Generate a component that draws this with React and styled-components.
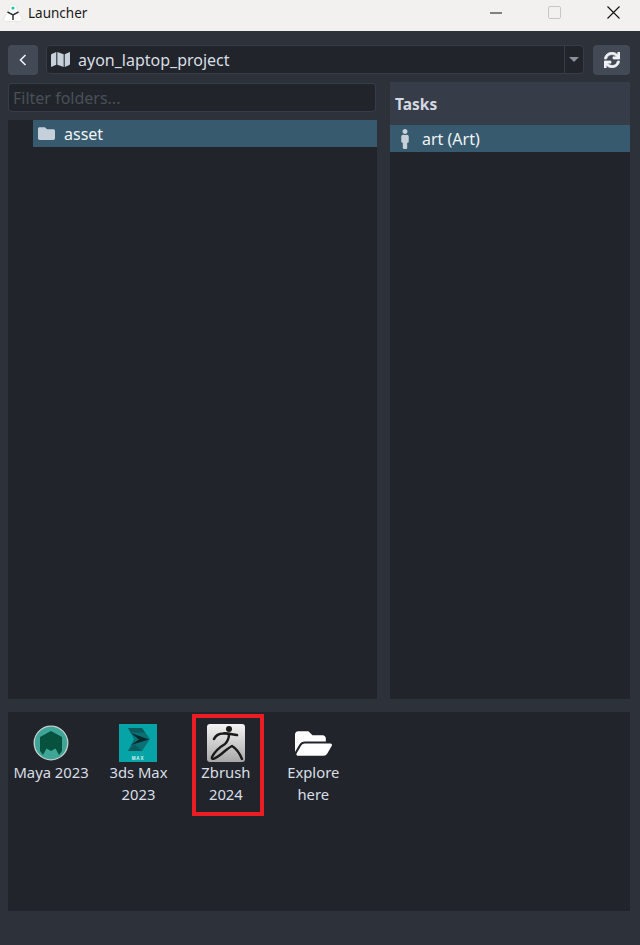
import React from "react";
import styled, { createGlobalStyle } from "styled-components";
import { FaMap, FaFolder, FaMale, FaSync, FaFolderOpen } from "react-icons/fa";

const Global = createGlobalStyle`
  html, body { margin: 0; padding: 0; height: 100%; background: #2c313a; }
  #root { height: 945px; }
  * { box-sizing: border-box; }
`;

const Page = styled.div`
  width: 640px;
  height: 945px;
  display: flex;
  flex-direction: column;
  background: #2c313a;
  color: #d9dee6;
  font-family: "Noto Sans", sans-serif;
  font-size: 16px;
  overflow: hidden;
`;

const TitleBar = styled.div`
  height: 31px;
  flex: none;
  display: flex;
  align-items: center;
  background: #f3f1f0;
  color: #1a1a1a;
  font-size: 13.5px;
  padding: 0 0 6px 3px;
`;

const TitleText = styled.span`
  margin-left: 5px;
  flex: 1;
`;

const WindowButtons = styled.div`
  display: flex;
  margin-right: -3px;
`;

const WindowButton = styled.div`
  width: 59px;
  height: 25px;
  display: flex;
  align-items: center;
  justify-content: center;
`;

const Body = styled.div`
  flex: 1;
  display: flex;
  flex-direction: column;
  padding: 14px 10px 34px 8px;
`;

const TopRow = styled.div`
  display: flex;
  height: 30px;
  align-items: flex-start;
`;

const IconButton = styled.div`
  width: ${(p) => p.$w}px;
  height: 30px;
  flex: none;
  display: flex;
  align-items: center;
  justify-content: center;
  background: #434a56;
  border-radius: 4px;
  color: #f0f2f5;
  & > svg.sync { stroke: currentColor; stroke-width: 24; }
`;

const Combo = styled.div`
  flex: 1;
  height: 29px;
  margin: 0 9px 0 8px;
  display: flex;
  align-items: stretch;
  background: #21252b;
  border: 1px solid #373d48;
  border-radius: 4px;
`;

const ComboValue = styled.div`
  flex: 1;
  display: flex;
  align-items: center;
  padding-left: 4px;
  gap: 8px;
  color: #d9dee6;
`;

const ComboArrow = styled.div`
  width: 19px;
  border-left: 1px solid #373d48;
  display: flex;
  align-items: center;
  justify-content: center;
`;

const Triangle = styled.div`
  width: 0;
  height: 0;
  border-left: 5px solid transparent;
  border-right: 5px solid transparent;
  border-top: 5px solid #8a8f98;
`;

const Columns = styled.div`
  flex: none;
  height: 617px;
  margin-top: 7px;
  display: flex;
  gap: 13px;
`;

const LeftColumn = styled.div`
  width: 369px;
  display: flex;
  flex-direction: column;
`;

const Filter = styled.div`
  width: 368px;
  height: 29px;
  flex: none;
  margin-top: 1px;
  padding-left: 4px;
  display: flex;
  align-items: center;
  background: #21252b;
  border: 1px solid #373d48;
  border-radius: 4px;
  color: #4a4f58;
`;

const FolderPanel = styled.div`
  flex: 1;
  margin-top: 8px;
  background: #21252b;
`;

const FolderRow = styled.div`
  height: 27px;
  margin-left: 25px;
  padding-left: 5px;
  display: flex;
  align-items: center;
  gap: 9px;
  background: #385a6e;
  color: #f0f3f6;
  & svg { color: #c5d0da; }
`;

const TasksPanel = styled.div`
  flex: 1;
  display: flex;
  flex-direction: column;
  background: #21252b;
`;

const TasksHeader = styled.div`
  height: 43px;
  flex: none;
  padding-left: 5px;
  display: flex;
  align-items: center;
  background: #373d48;
  font-weight: 700;
  color: #d4dae2;
  font-size: 15.5px;
`;

const TaskRow = styled.div`
  height: 27px;
  flex: none;
  padding-left: 5px;
  display: flex;
  align-items: center;
  gap: 7px;
  background: #385a6e;
  color: #f0f3f6;
  & svg { color: #c5d0da; }
`;

const AppsPanel = styled.div`
  flex: 1;
  margin-top: 13px;
  display: flex;
  align-items: flex-start;
  padding: 13px 0 0 0;
  background: #21252b;
`;

const AppTile = styled.div`
  position: relative;
  width: 87.4px;
  flex: none;
  margin-left: ${(p) => (p.$first ? "-0.6px" : "0")};
  display: flex;
  flex-direction: column;
  align-items: center;
  text-align: center;
  color: #d9dee6;
  font-size: 14.8px;
  line-height: 22px;
`;

const AppIconBox = styled.div`
  height: 36px;
  display: flex;
  align-items: center;
  justify-content: center;
`;

const AppLabel = styled.div`
  width: 80px;
`;

const Highlight = styled.div`
  position: absolute;
  left: 9.7px;
  top: -11px;
  width: 72px;
  height: 102px;
  border: 4px solid #ec1c24;
`;

const LauncherLogo = () => (
  <svg width="20" height="20" viewBox="0 0 20 20">
    <path d="M10 1.5 C12 1.5 13 3 13.5 5 L18.5 14 C20 17 18.5 18.5 16.5 18.5 L3.5 18.5 C1.5 18.5 0 17 1.5 14 L6.5 5 C7 3 8 1.5 10 1.5Z" fill="#fff" stroke="#e8e6e5" />
    <circle cx="10" cy="5" r="1.6" fill="#19c7a8" />
    <path d="M4.5 9 L10 12 L15.5 9 M10 12 V17" fill="none" stroke="#333" strokeWidth="1.5" />
  </svg>
);

const MinimizeIcon = () => (
  <svg width="12" height="2" viewBox="0 0 12 2"><path d="M0 1H12" stroke="#111" strokeWidth="1" /></svg>
);
const MaximizeIcon = () => (
  <svg width="13" height="13" viewBox="0 0 13 13"><rect x=".5" y=".5" width="12" height="12" rx="1.5" fill="none" stroke="#c9c7c6" /></svg>
);
const CloseIcon = () => (
  <svg width="13" height="13" viewBox="0 0 13 13"><path d="M.5.5L12.5 12.5M12.5.5L.5 12.5" stroke="#111" strokeWidth="1.1" /></svg>
);
const BackIcon = () => (
  <svg width="8" height="12" viewBox="0 0 8 12"><path d="M6.5 1 L1.5 6 L6.5 11" fill="none" stroke="#f0f2f5" strokeWidth="1.6" /></svg>
);

const MayaIcon = () => (
  <svg width="38" height="36" viewBox="0 0 38 36">
    <circle cx="19" cy="18" r="16.8" fill="#3fa597" stroke="#c7d0cd" strokeWidth="1.3" />
    <path d="M19 6 L30 12 V26 L27 30 L23.5 23.5 L19 26 L14.5 23.5 L11 30 L8 26 V12 Z" fill="#07523f" />
  </svg>
);
const MaxIcon = () => (
  <svg width="38" height="38" viewBox="0 0 38 38">
    <rect width="38" height="38" fill="#06a4a6" />
    <path d="M9 4 H23 L31 15 L23 27 H9 L15 15 Z" fill="#0a7074" />
    <path d="M9 4 H23 L26 8.5 H12 Z" fill="#0b5a5e" />
    <path d="M12 9 L30 15.5 L12 21 L20 15.5 Z" fill="#06292d" />
    <path d="M9 27 L15 20 L23 27 Z" fill="#0b5a5e" />
    <text x="19" y="36" textAnchor="middle" fontFamily="Liberation Sans, sans-serif" fontWeight="700" fontSize="4.6" letterSpacing="0.8" fill="#d8f3f3">MAX</text>
  </svg>
);
const ZbrushIcon = () => (
  <svg width="38" height="38" viewBox="0 0 38 38">
    <defs>
      <linearGradient id="zb" x1="0" y1="0" x2="0" y2="1">
        <stop offset="0" stopColor="#f4f4f4" />
        <stop offset="1" stopColor="#a8a8a8" />
      </linearGradient>
    </defs>
    <rect width="38" height="38" rx="3" fill="url(#zb)" />
    <circle cx="22" cy="5" r="3" fill="#1a1a1a" />
    <path d="M7 15 C9 11 12 9.5 16 9.5 C21 9 25 10.5 30 11" fill="none" stroke="#1a1a1a" strokeWidth="2.6" strokeLinecap="round" />
    <path d="M22 10 C22 15 20 18 18 20 C13 23 8 27 5 33 C4 37 9 34 13 31 C17 28 21 24 25 22 C30 25 33 30 35 35" fill="none" stroke="#1a1a1a" strokeWidth="2.4" strokeLinecap="round" />
  </svg>
);

const apps = [
  { id: "maya", label: "Maya 2023", icon: <MayaIcon /> },
  { id: "max", label: "3ds Max 2023", icon: <MaxIcon /> },
  { id: "zbrush", label: "Zbrush 2024", icon: <ZbrushIcon />, highlighted: true },
  { id: "explore", label: "Explore here", icon: <FaFolderOpen size={37} color="#fff" /> },
];

export default function App() {
  return (
    <Page>
      <Global />
      <TitleBar>
        <LauncherLogo />
        <TitleText>Launcher</TitleText>
        <WindowButtons>
          <WindowButton><MinimizeIcon /></WindowButton>
          <WindowButton><MaximizeIcon /></WindowButton>
          <WindowButton><CloseIcon /></WindowButton>
        </WindowButtons>
      </TitleBar>
      <Body>
        <TopRow>
          <IconButton $w={30}><BackIcon /></IconButton>
          <Combo>
            <ComboValue><FaMap size={19} color="#c5d0da" />ayon_laptop_project</ComboValue>
            <ComboArrow><Triangle /></ComboArrow>
          </Combo>
          <IconButton $w={37}><FaSync className="sync" size={16} /></IconButton>
        </TopRow>
        <Columns>
          <LeftColumn>
            <Filter>Filter folders...</Filter>
            <FolderPanel>
              <FolderRow><FaFolder size={17} />asset</FolderRow>
            </FolderPanel>
          </LeftColumn>
          <TasksPanel>
            <TasksHeader>Tasks</TasksHeader>
            <TaskRow><FaMale size={20} />art (Art)</TaskRow>
          </TasksPanel>
        </Columns>
        <AppsPanel>
          {apps.map((app, i) => (
            <AppTile key={app.id} $first={i === 0}>
              <AppIconBox>{app.icon}</AppIconBox>
              <AppLabel>{app.label}</AppLabel>
              {app.highlighted && <Highlight />}
            </AppTile>
          ))}
        </AppsPanel>
      </Body>
    </Page>
  );
}
